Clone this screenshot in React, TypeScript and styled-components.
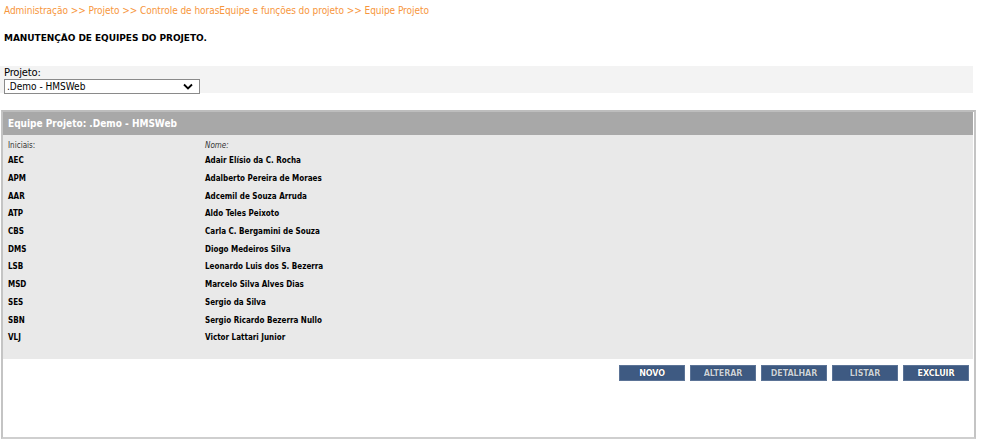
import React from "react";
import styled, { createGlobalStyle } from "styled-components";

const Global = createGlobalStyle`
  html, body { margin: 0; padding: 0; background: #fff; }
  body { font-family: "DejaVu Sans", Verdana, sans-serif; }
`;

const narrow = `"DejaVu Sans Condensed", "DejaVu Sans", Verdana, sans-serif`;

const Page = styled.div`
  width: 981px;
  padding: 0 0 0 1px;
  box-sizing: border-box;
`;

const Breadcrumb = styled.div`
  margin: 5px 0 0 3px;
  color: #f7963c;
  font-family: ${narrow};
  font-size: 10px;
  line-height: 12px;
  letter-spacing: -0.05px;
`;

const Title = styled.h1`
  margin: 15px 0 0 3px;
  font-size: 9px;
  line-height: 12px;
  font-weight: bold;
  color: #000;
  letter-spacing: -0.05px;
`;

const FilterPanel = styled.div`
  margin: 22px 0 0 -1px;
  width: 973px;
  height: 27px;
  background: #f3f3f3;
  padding: 2px 0 0 4px;
  box-sizing: border-box;
`;

const Label = styled.div`
  font-size: 10px;
  line-height: 10px;
  color: #000;
  letter-spacing: -0.2px;
`;

const Select = styled.div`
  margin-top: 1px;
  width: 196px;
  height: 15px;
  box-sizing: border-box;
  border: 1px solid #8a8a8a;
  background: #fff;
  display: flex;
  align-items: center;
  justify-content: space-between;
  padding: 0 6px 0 2px;
  font-family: ${narrow};
  font-size: 10px;
  color: #000;
`;

const Box = styled.div`
  margin-top: 17px;
  width: 975px;
  height: 329px;
  box-sizing: border-box;
  border: 2px solid #c4c4c4;
  border-top-color: #bdbdbd;
  border-bottom-color: #cfcfcf;
  display: flex;
  flex-direction: column;
`;

const Header = styled.div`
  height: 23px;
  background: #a8a8a8;
  color: #fff;
  font-family: ${narrow};
  font-weight: bold;
  font-size: 10px;
  padding-left: 5px;
  display: flex;
  align-items: center;
  margin-right: 1px;
`;

const Body = styled.div`
  background: #e9e9e9;
  height: 224px;
  padding-top: 3px;
  box-sizing: border-box;
  margin-right: 1px;
`;

const Row = styled.div<{ $head?: boolean }>`
  display: grid;
  grid-template-columns: 197px 1fr;
  padding-left: 5px;
  height: ${(p) => (p.$head ? "14px" : "17.7px")};
  align-items: center;
  font-family: ${narrow};
  font-size: 8px;
  color: #000;
  font-weight: ${(p) => (p.$head ? "normal" : "bold")};
`;

const HeadCell = styled.span<{ $italic?: boolean }>`
  font-style: ${(p) => (p.$italic ? "italic" : "normal")};
  color: #333;
`;

const Actions = styled.div`
  display: flex;
  justify-content: flex-end;
  gap: 5px;
  padding: 6px 5px 0 0;
`;

const Button = styled.button<{ $muted?: boolean }>`
  width: 66px;
  height: 16px;
  padding: 0;
  border: 1px solid #5b7396;
  background: #3e5a82;
  color: ${(p) => (p.$muted ? "#c9d1dc" : "#ffffff")};
  font-family: "DejaVu Sans", Verdana, sans-serif;
  font-weight: bold;
  font-size: 8px;
  letter-spacing: -0.1px;
  text-shadow: 0 0 1px rgba(0, 0, 0, 0.6);
  cursor: pointer;
`;

const members: [string, string][] = [
  ["AEC", "Adair Elísio da C. Rocha"],
  ["APM", "Adalberto Pereira de Moraes"],
  ["AAR", "Adcemil de Souza Arruda"],
  ["ATP", "Aldo Teles Peixoto"],
  ["CBS", "Carla C. Bergamini de Souza"],
  ["DMS", "Diogo Medeiros Silva"],
  ["LSB", "Leonardo Luis dos S. Bezerra"],
  ["MSD", "Marcelo Silva Alves Dias"],
  ["SES", "Sergio da Silva"],
  ["SBN", "Sergio Ricardo Bezerra Nullo"],
  ["VLJ", "Victor Lattari Junior"],
];

export default function App() {
  return (
    <Page>
      <Global />
      <Breadcrumb>
        Administração &gt;&gt; Projeto &gt;&gt; Controle de horasEquipe e funções do projeto &gt;&gt; Equipe Projeto
      </Breadcrumb>
      <Title>MANUTENÇÃO DE EQUIPES DO PROJETO.</Title>
      <FilterPanel>
        <Label>Projeto:</Label>
        <Select>
          <span>.Demo - HMSWeb</span>
          <svg width="10" height="7" viewBox="0 0 10 7">
            <path d="M1 1.5 L5 5.5 L9 1.5" fill="none" stroke="#000" strokeWidth="1.8" />
          </svg>
        </Select>
      </FilterPanel>
      <Box>
        <Header>Equipe Projeto: .Demo - HMSWeb</Header>
        <Body>
          <Row $head>
            <HeadCell>Iniciais:</HeadCell>
            <HeadCell $italic>Nome:</HeadCell>
          </Row>
          {members.map(([ini, name]) => (
            <Row key={ini}>
              <span>{ini}</span>
              <span>{name}</span>
            </Row>
          ))}
        </Body>
        <Actions>
          <Button>NOVO</Button>
          <Button $muted>ALTERAR</Button>
          <Button $muted>DETALHAR</Button>
          <Button $muted>LISTAR</Button>
          <Button>EXCLUIR</Button>
        </Actions>
      </Box>
    </Page>
  );
}
